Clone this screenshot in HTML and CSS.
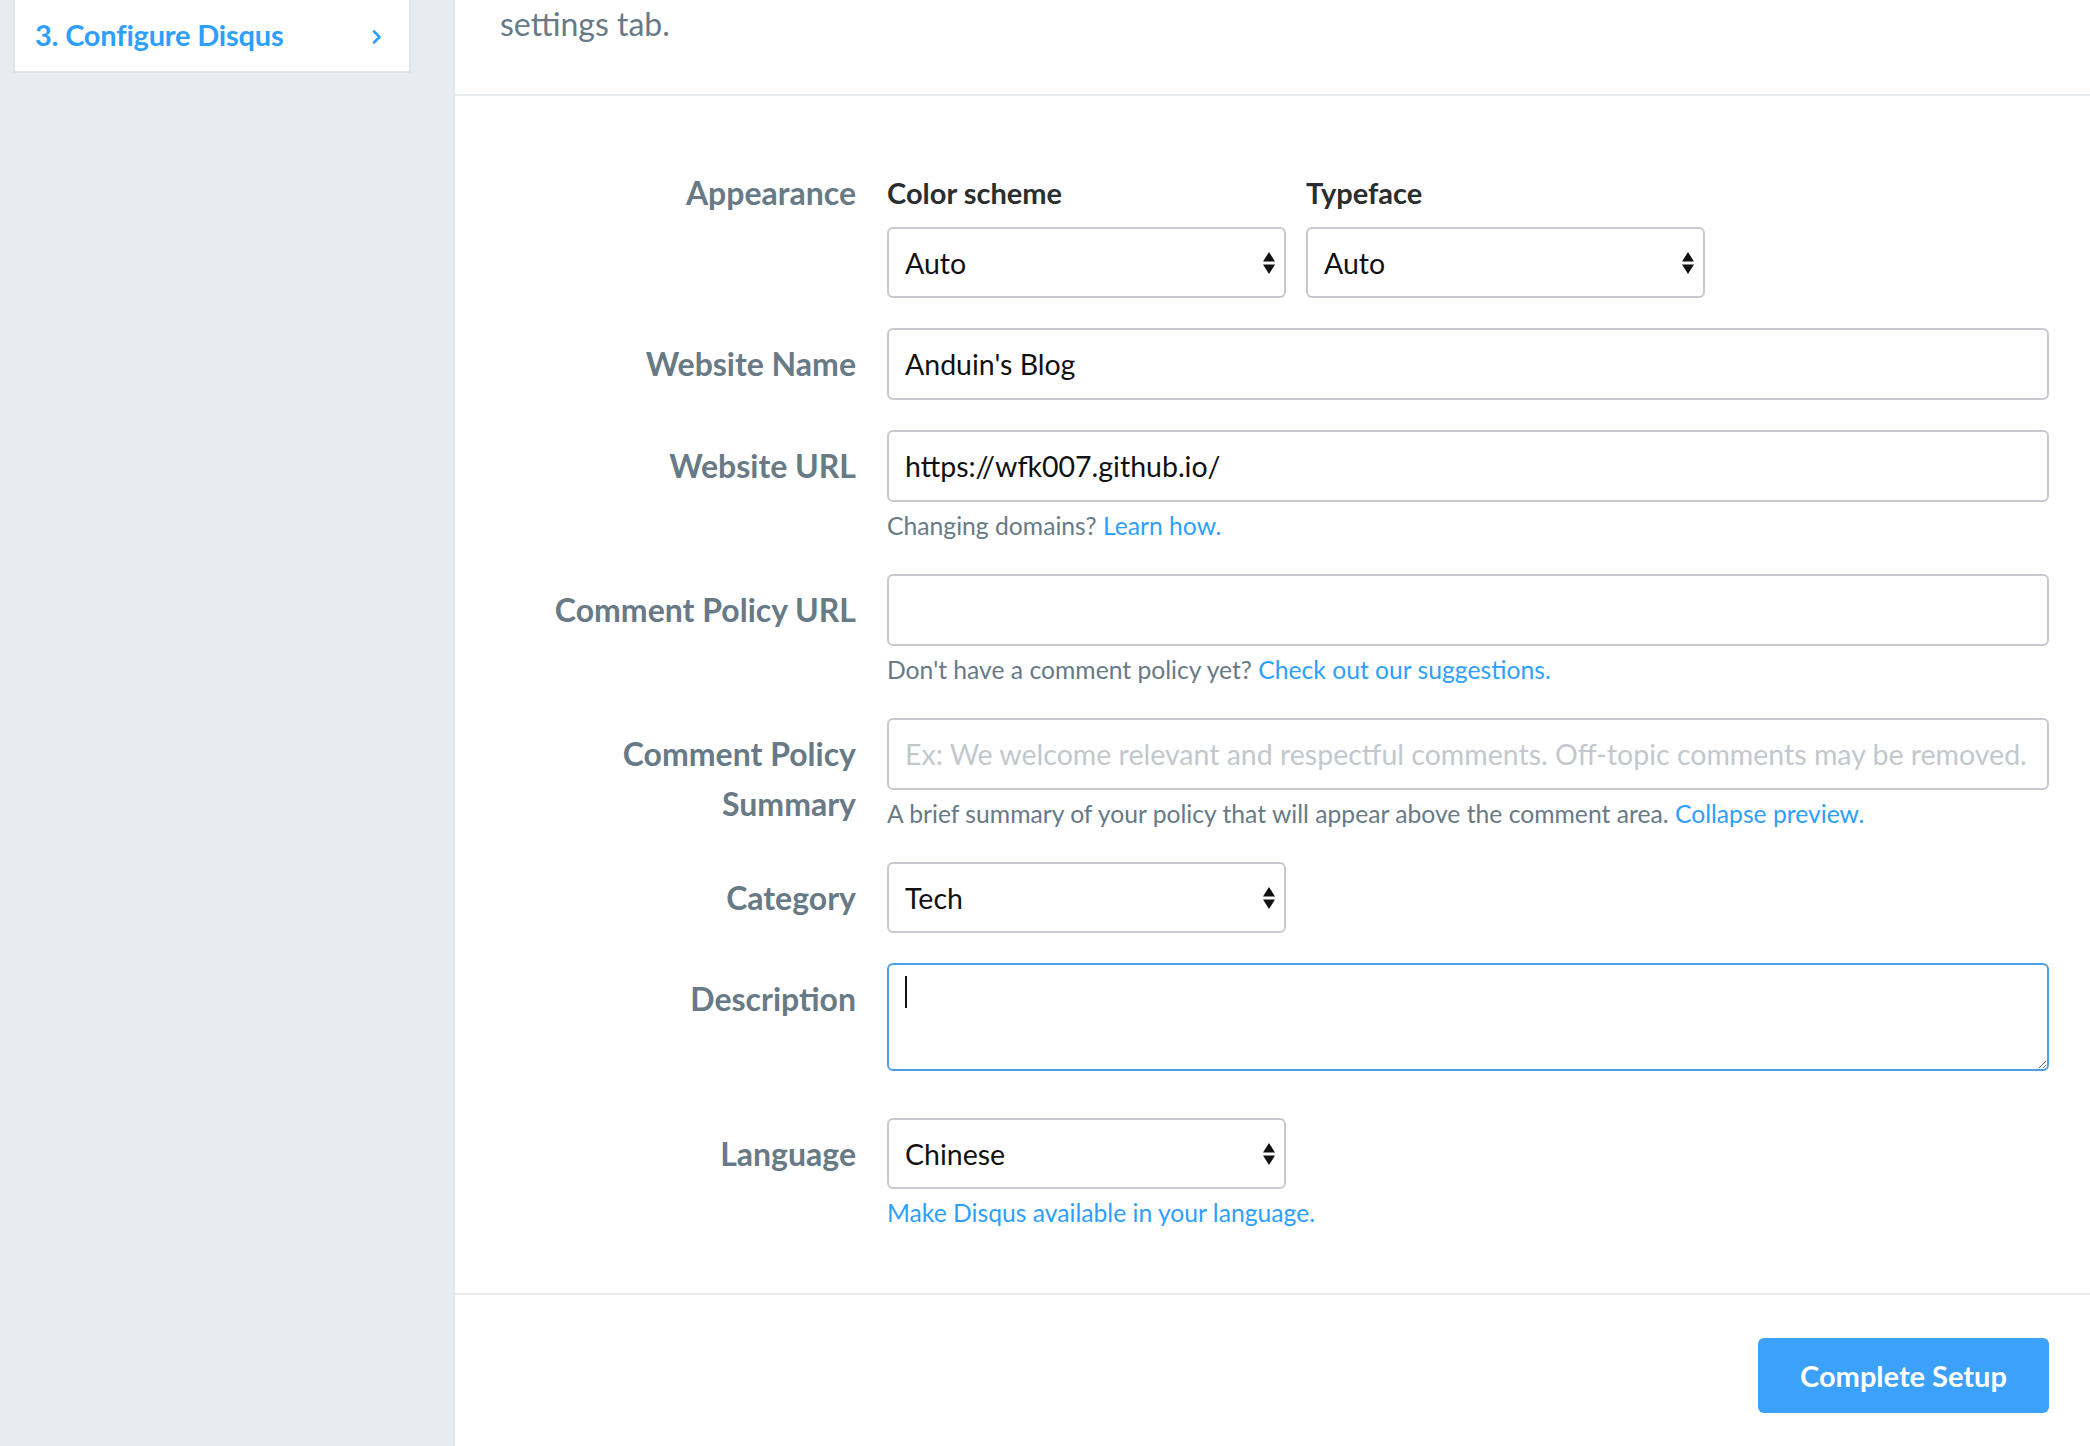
FILE: index.html
```html
<!DOCTYPE html>
<html lang="en">
<head>
<meta charset="utf-8">
<title>Configure Disqus</title>
<link rel="stylesheet" href="styles.css">
</head>
<body>
<div class="app">
  <aside class="sidebar">
    <div class="step-card">
      <span class="step-title">3. Configure Disqus</span>
      <svg class="chev" width="12" height="16" viewBox="0 0 12 16"><path d="M3 2.5 L8.5 8 L3 13.5" fill="none" stroke="#2e9fff" stroke-width="2.6" stroke-linecap="round" stroke-linejoin="round"/></svg>
    </div>
  </aside>
  <main class="main">
    <div class="intro"><p class="intro-text">settings tab.</p></div>
    <form class="form">
      <div class="row">
        <div class="label label-top">Appearance</div>
        <div class="control appearance">
          <div class="sub">
            <div class="sub-title">Color scheme</div>
            <div class="select-wrap">
              <select class="field select"><option>Auto</option></select>
              <svg class="arrows" width="14" height="28" viewBox="0 0 14 28"><path d="M7 3 L13 12.5 L1 12.5 Z M1 15.5 L13 15.5 L7 25 Z" fill="#111"/></svg>
            </div>
          </div>
          <div class="sub">
            <div class="sub-title">Typeface</div>
            <div class="select-wrap">
              <select class="field select"><option>Auto</option></select>
              <svg class="arrows" width="14" height="28" viewBox="0 0 14 28"><path d="M7 3 L13 12.5 L1 12.5 Z M1 15.5 L13 15.5 L7 25 Z" fill="#111"/></svg>
            </div>
          </div>
        </div>
      </div>

      <div class="row">
        <div class="label">Website Name</div>
        <div class="control"><input class="field input" type="text" value="Anduin's Blog"></div>
      </div>

      <div class="row">
        <div class="label">Website URL</div>
        <div class="control">
          <input class="field input" type="text" value="https://wfk007.github.io/">
          <p class="help">Changing domains? <a class="link" href="#">Learn how.</a></p>
        </div>
      </div>

      <div class="row">
        <div class="label">Comment Policy URL</div>
        <div class="control">
          <input class="field input" type="text" value="">
          <p class="help">Don't have a comment policy yet? <a class="link" href="#">Check out our suggestions.</a></p>
        </div>
      </div>

      <div class="row">
        <div class="label">Comment Policy<br>Summary</div>
        <div class="control">
          <input class="field input" type="text" placeholder="Ex: We welcome relevant and respectful comments. Off-topic comments may be removed.">
          <p class="help">A brief summary of your policy that will appear above the comment area. <a class="link" href="#">Collapse preview.</a></p>
        </div>
      </div>

      <div class="row">
        <div class="label">Category</div>
        <div class="control">
          <div class="select-wrap">
            <select class="field select"><option>Tech</option></select>
            <svg class="arrows" width="14" height="28" viewBox="0 0 14 28"><path d="M7 3 L13 12.5 L1 12.5 Z M1 15.5 L13 15.5 L7 25 Z" fill="#111"/></svg>
          </div>
        </div>
      </div>

      <div class="row row-desc">
        <div class="label">Description</div>
        <div class="control">
          <div class="textarea-wrap">
            <textarea class="field textarea"></textarea>
            <span class="caret"></span>
          </div>
        </div>
      </div>

      <div class="row">
        <div class="label">Language</div>
        <div class="control">
          <div class="select-wrap">
            <select class="field select"><option>Chinese</option></select>
            <svg class="arrows" width="14" height="28" viewBox="0 0 14 28"><path d="M7 3 L13 12.5 L1 12.5 Z M1 15.5 L13 15.5 L7 25 Z" fill="#111"/></svg>
          </div>
          <p class="help"><a class="link" href="#">Make Disqus available in your language.</a></p>
        </div>
      </div>
    </form>
    <div class="footer">
      <button class="btn" type="button">Complete Setup</button>
    </div>
  </main>
</div>
</body>
</html>
```

FILE: styles.css
```css
* { box-sizing: border-box; }
html, body {
  margin: 0;
  padding: 0;
  height: 100%;
  overflow: hidden;
  background: #ffffff;
  font-family: "Lato", "Liberation Sans", sans-serif;
}
.app {
  display: flex;
  height: 1446px;
}
.sidebar {
  width: 453px;
  flex: 0 0 453px;
  background: #e8ecf0;
  padding-left: 13px;
}
.step-card {
  width: 398px;
  height: 73px;
  background: #ffffff;
  border: 2px solid #dfe3e8;
  border-top: none;
  display: flex;
  align-items: center;
  justify-content: space-between;
  padding: 0 26px 0 20px;
}
.step-title {
  color: #2e9fff;
  font-size: 29px;
  font-weight: 700;
  letter-spacing: -0.2px;
  margin-top: -2px;
}
.chev { display: block; margin-top: 2px; }

.main {
  flex: 1;
  border-left: 2px solid #e3e7eb;
  background: #ffffff;
  display: flex;
  flex-direction: column;
}
.intro {
  height: 96px;
  border-bottom: 2px solid #eaedf0;
  padding-left: 45px;
}
.intro-text {
  margin: 0;
  padding-top: 4px;
  font-size: 32px;
  line-height: 40px;
  color: #687a86;
}

.form {
  padding: 77px 41px 0 0;
  display: flex;
  flex-direction: column;
  gap: 30px;
  border-bottom: 2px solid #eaedf0;
  padding-bottom: 62px;
}
.row {
  display: grid;
  grid-template-columns: 401px 1fr;
  column-gap: 31px;
}
.row-desc { margin-bottom: 17px; }
.label {
  text-align: right;
  font-size: 32px;
  font-weight: 700;
  color: #687a86;
  line-height: 50px;
  padding-top: 11px;
}
.label-top {
  line-height: 40px;
  padding-top: 0;
}
.control { min-width: 0; }
.appearance {
  display: flex;
  gap: 20px;
}
.sub-title {
  font-size: 29px;
  font-weight: 700;
  color: #2a2e2e;
  line-height: 40px;
  margin-bottom: 14px;
}
.field {
  display: block;
  width: 100%;
  height: 72px;
  border: 2px solid #c6cad0;
  border-radius: 6px;
  background: #ffffff;
  font-family: "Lato", "Liberation Sans", sans-serif;
  font-size: 28.5px;
  color: #111111;
  padding: 0 16px;
  outline: none;
}
.input::placeholder { color: #c3c8ce; }
.select-wrap {
  position: relative;
  width: 399px;
}
.select {
  -webkit-appearance: none;
  appearance: none;
  height: 71px;
}
.arrows {
  position: absolute;
  right: 10px;
  top: 22px;
}
.textarea-wrap { position: relative; }
.textarea {
  height: 108px;
  border-color: #4a9fe6;
  resize: vertical;
  padding-top: 10px;
}
.caret {
  position: absolute;
  left: 18px;
  top: 13px;
  width: 2px;
  height: 32px;
  background: #111;
}
.help {
  margin: 6px 0 0 0;
  font-size: 24.7px;
  line-height: 36px;
  color: #687a86;
}
.link {
  color: #2e9fff;
  text-decoration: none;
}
.footer {
  display: flex;
  justify-content: flex-end;
  padding: 43px 41px 0 0;
}
.btn {
  width: 291px;
  height: 75px;
  border: none;
  border-radius: 6px;
  background: #3ba1fb;
  color: #ffffff;
  font-family: "Lato", "Liberation Sans", sans-serif;
  font-size: 29px;
  font-weight: 700;
}
```
